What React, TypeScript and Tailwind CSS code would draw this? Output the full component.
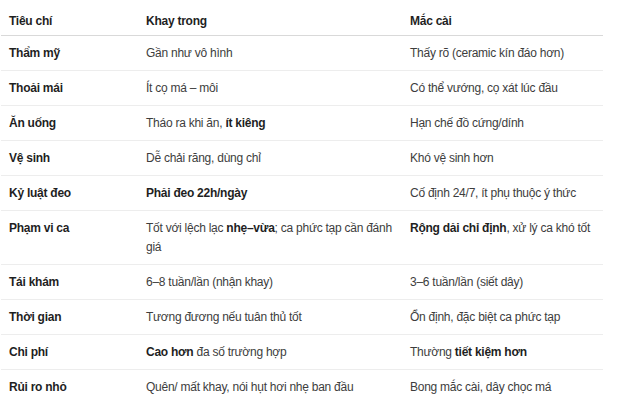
const rows: { label: string; a: React.ReactNode; b: React.ReactNode }[] = [
  { label: "Thẩm mỹ", a: "Gần như vô hình", b: "Thấy rõ (ceramic kín đáo hơn)" },
  { label: "Thoải mái", a: "Ít cọ má – môi", b: "Có thể vướng, cọ xát lúc đầu" },
  {
    label: "Ăn uống",
    a: (
      <>
        Tháo ra khi ăn, <b className="font-bold text-[#1f1f1f]">ít kiêng</b>
      </>
    ),
    b: "Hạn chế đồ cứng/dính",
  },
  { label: "Vệ sinh", a: "Dễ chải răng, dùng chỉ", b: "Khó vệ sinh hơn" },
  {
    label: "Kỷ luật đeo",
    a: <b className="font-bold text-[#1f1f1f]">Phải đeo 22h/ngày</b>,
    b: "Cố định 24/7, ít phụ thuộc ý thức",
  },
  {
    label: "Phạm vi ca",
    a: (
      <>
        Tốt với lệch lạc <b className="font-bold text-[#1f1f1f]">nhẹ–vừa</b>; ca phức tạp cần đánh giá
      </>
    ),
    b: (
      <>
        <b className="font-bold text-[#1f1f1f]">Rộng dải chỉ định</b>, xử lý ca khó tốt
      </>
    ),
  },
  { label: "Tái khám", a: "6–8 tuần/lần (nhận khay)", b: "3–6 tuần/lần (siết dây)" },
  { label: "Thời gian", a: "Tương đương nếu tuân thủ tốt", b: "Ổn định, đặc biệt ca phức tạp" },
  {
    label: "Chi phí",
    a: (
      <>
        <b className="font-bold text-[#1f1f1f]">Cao hơn</b> đa số trường hợp
      </>
    ),
    b: (
      <>
        Thường <b className="font-bold text-[#1f1f1f]">tiết kiệm hơn</b>
      </>
    ),
  },
  { label: "Rủi ro nhỏ", a: "Quên/ mất khay, nói hụt hơi nhẹ ban đầu", b: "Bong mắc cài, dây chọc má" },
]

export default function App() {
  return (
    <div
      className="w-[622px] h-[400px] bg-white overflow-hidden pl-px"
      style={{ fontFamily: '"Liberation Sans", Arial, sans-serif' }}
    >
      <table className="w-[602px] border-collapse table-fixed text-[12px] leading-[19px] tracking-[-0.25px] text-[#3d3d3d]">
        <colgroup>
          <col className="w-[137px]" />
          <col className="w-[264px]" />
          <col className="w-[201px]" />
        </colgroup>
        <thead>
          <tr className="border-b border-[#d9d9d9]">
            <th className="pl-2 pr-2 pt-[12px] pb-[4px] text-left font-bold text-[#1f1f1f]">Tiêu chí</th>
            <th className="pl-2 pr-2 pt-[12px] pb-[4px] text-left font-bold text-[#1f1f1f]">Khay trong</th>
            <th className="pl-2 pr-2 pt-[12px] pb-[4px] text-left font-bold text-[#1f1f1f]">Mắc cài</th>
          </tr>
        </thead>
        <tbody>
          {rows.map((r, i) => (
            <tr key={i} className="border-b border-[#ededed] align-top">
              <td className="pl-2 pr-2 pt-2 pb-[7px] font-bold text-[#1f1f1f]">{r.label}</td>
              <td className="pl-2 pr-1 pt-2 pb-[7px]">{r.a}</td>
              <td className="pl-2 pr-1 pt-2 pb-[7px]">{r.b}</td>
            </tr>
          ))}
        </tbody>
      </table>
    </div>
  )
}
